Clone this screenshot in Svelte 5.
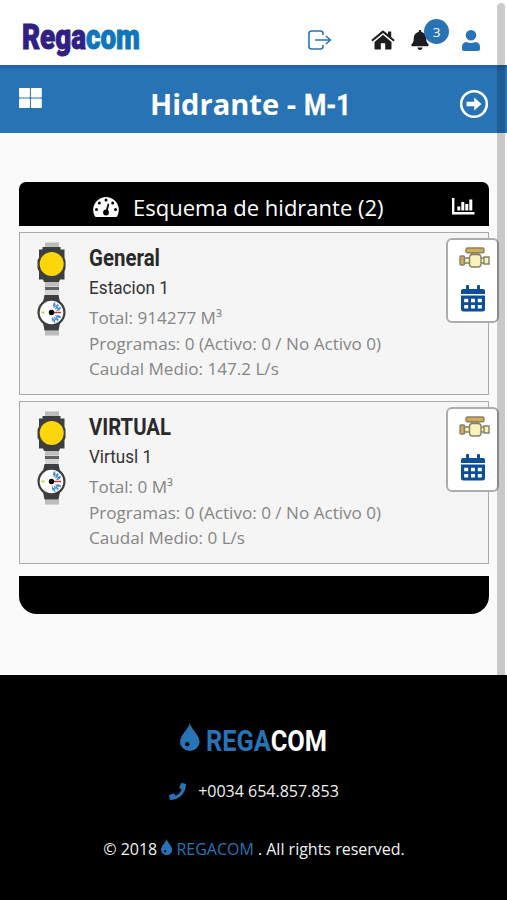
<script>
  const stations = [
    { name: "General", nameWidth: 71, place: "Estacion 1", placeWidth: 80, total: "914277", flow: "147.2" },
    { name: "VIRTUAL", nameWidth: 82, place: "Virtusl 1", placeWidth: 63, total: "0", flow: "0" },
  ];

  const ticks = [-72, -50, -28, 28, 50, 72];
</script>

{#snippet drop(size)}
  <svg class="drop" width={size * 0.7} height={size} viewBox="0 0 19 27">
    <path d="M9.5 0C8.5 5.5 0 12 0 18a9.5 9 0 0 0 19 0C19 12 10.5 5.500 9.500 0z" />
    <circle class="hole" cx="7" cy="20.500" r="2.100" />
  </svg>
{/snippet}

<header>
  <svg class="logo" width="122" height="36" viewBox="0 0 122 36">
    <text x="1" y="27" textLength="118" lengthAdjust="spacingAndGlyphs">Rega<tspan>com</tspan></text>
  </svg>
  <nav>
    <svg class="out" width="24" height="20" viewBox="0 0 24 20">
      <path d="M15 5V3.500Q15 1 12.500 1H3.500Q1 1 1 3.500v13Q1 19 3.500 19h9Q15 19 15 16.500V15M7 10h15M18 6l4.300 4-4.300 4" />
    </svg>
    <svg class="home" width="24" height="20" viewBox="0 0 24 20">
      <path d="M12 4.700 3.500 12v6.500Q3.500 19.500 4.500 19.500h5.300v-6.300h4.400v6.300h5.300q1 0 1-1V12z" />
      <path d="M11 .900q1-.8 2 0l4 3.400V1.500h3.200v5.600l3.500 3-1.200 1.500L12 2.900l-10.500 8.700L.300 10.100z" />
    </svg>
    <div class="bell">
      <svg width="18" height="20" viewBox="0 0 448 512">
        <path d="M224 512c35.320 0 63.970-28.650 63.970-64H160.030c0 35.350 28.650 64 63.970 64zm215.390-149.710c-19.320-20.760-55.470-51.990-55.470-154.290 0-77.700-54.480-139.900-127.940-155.160V32c0-17.670-14.320-32-31.980-32s-31.980 14.330-31.980 32v20.840C118.560 68.100 64.080 130.300 64.080 208c0 102.300-36.150 133.530-55.470 154.290-6 6.450-8.660 14.160-8.610 21.710.11 16.400 12.980 32 32.100 32h383.800c19.120 0 32-15.600 32.100-32 .05-7.550-2.610-15.270-8.610-21.710z" />
      </svg>
      <span class="badge">3</span>
    </div>
    <svg class="user" width="18" height="21" viewBox="0 0 18 21">
      <circle cx="9" cy="5.300" r="5.300" />
      <path d="M4.500 12Q9 14 13.500 12 18 12.500 18 17v2q0 2-2 2H2q-2 0-2-2v-2q0-4.500 4.500-5z" />
    </svg>
  </nav>
</header>

<div class="titlebar">
  <svg class="grid" width="23" height="20" viewBox="0 0 23 20">
    <rect width="10.900" height="9.500" rx="0.800" />
    <rect x="11.900" width="10.900" height="9.500" rx="0.800" />
    <rect y="10.500" width="10.900" height="9.500" rx="0.800" />
    <rect x="11.900" y="10.500" width="10.900" height="9.500" rx="0.800" />
  </svg>
  <svg class="title" width="204" height="40" viewBox="0 0 204 40">
    <text class="word" x="0" y="30" textLength="146" lengthAdjust="spacingAndGlyphs">Hidrante -</text>
    <text class="code" x="154" y="30" textLength="47" lengthAdjust="spacingAndGlyphs">M-1</text>
  </svg>
  <svg class="next" width="30" height="30" viewBox="0 0 30 30">
    <circle cx="15" cy="15" r="12.800" />
    <path d="M7.500 12.800h7.700V8.500l7.300 6.500-7.300 6.500v-4.300H7.500z" />
  </svg>
</div>

<main>
  <div class="head">
    <svg class="gauge" width="26" height="20" viewBox="0 0 26 20">
      <path d="M13 0A13 13 0 0 0 1.800 19.300q.4.700 1.200.7h20q.8 0 1.200-.7A13 13 0 0 0 13 0z" />
      <g class="dots">
        <circle cx="3.500" cy="12.500" r="1.500" />
        <circle cx="6.300" cy="6" r="1.500" />
        <circle cx="13" cy="3.100" r="1.500" />
        <circle cx="19.700" cy="6" r="1.500" />
        <circle cx="22.500" cy="12.500" r="1.500" />
        <circle cx="13" cy="15.500" r="2.900" />
        <path d="M14.800 6.500l1.500.4-2 8h-2z" />
      </g>
    </svg>
    <h2>Esquema de hidrante (2)</h2>
    <svg class="chart" width="23" height="17" viewBox="0 0 23 17">
      <path d="M0 0h2.400v14H22.500v2.600H0zM5.300 8.500h3v4h-3zM9.300 4h3v8.500h-3zM13.300 6h3v6.500h-3zM17.300 1.500h3v11h-3z" />
    </svg>
  </div>

  {#each stations as s}
    <section>
      <svg class="device" width="30" height="94" viewBox="0 0 30 94">
        <path class="strap" d="M8 0h14v94H8z" />
        <path class="shade" d="M8 3h14M8 42h14M8 91h14" />
        <path class="strap-mark" d="M8 46.500h14" />
        <path class="case" d="M5.500 5h18v2.500h4v8l1 3v8l-1 3v8h-4.500l-1 2.500H7l-1-2.500H2v-8l-1.500-3v-8l1.500-3v-8h3.500z" />
        <circle class="yellow" cx="14.700" cy="22" r="12" />
        <path class="case" d="M7.500 53h14l1.500 7v21l-1.500 7.500h-14L6 81V60z" />
        <circle class="case" cx="14.500" cy="70.500" r="14" />
        <circle class="dial" cx="14.500" cy="70.500" r="11.800" />
        {#each ticks as angle}
          <path class="tick" d="M21 70.500h4" transform="rotate({angle} 14.500 70.500)" />
          <path class="tick thin" d="M19.500 70.500h4" transform="rotate({angle + 9} 14.500 70.500)" />
        {/each}
        <path class="green" d="M4.500 70.500h3" />
        <path class="red" d="M15 70.500h9" />
        <circle class="pivot" cx="14.500" cy="70.500" r="2.700" />
      </svg>
      <div class="info">
        <svg class="name" width={s.nameWidth + 2} height="30">
          <text x="0" y="23" textLength={s.nameWidth} lengthAdjust="spacingAndGlyphs">{s.name}</text>
        </svg>
        <svg class="place" width={s.placeWidth + 2} height="30">
          <text x="0" y="21" textLength={s.placeWidth} lengthAdjust="spacingAndGlyphs">{s.place}</text>
        </svg>
        <p>Total: {s.total} M³</p>
        <p>Programas: 0 (Activo: 0 / No Activo 0)</p>
        <p>Caudal Medio: {s.flow} L/s</p>
      </div>
      <div class="actions">
        <svg class="valve" width="31" height="22" viewBox="0 0 31 22">
          <path class="brass" d="M12.500 5h7v3.500h-7z" />
          <rect class="brass" x="7" y="1" width="18" height="4.800" rx="1.500" />
          <rect class="brass" x="1" y="9" width="4.500" height="9" rx="1" />
          <path class="pale" d="M5.500 11h5.500v5H5.500zM21 11h4v5h-4zM25 10h5v7h-5z" />
          <rect class="pale" x="10.500" y="7.500" width="11.500" height="12.500" rx="3" />
        </svg>
        <svg class="calendar" width="24" height="27" viewBox="0 0 24 27">
          <path d="M0 9V6q0-2 2-2h3V1q0-1 1-1h1q1 0 1 1v3h8V1q0-1 1-1h1q1 0 1 1v3h3q2 0 2 2v3zM0 10.500h24V24q0 2.500-2.500 2.500h-19Q0 26.500 0 24z" />
          <path class="cells" d="M3.200 13.700h4v3.600h-4zM10 13.700h4v3.600h-4zM16.800 13.700h4v3.600h-4zM3.200 20h4v3.600h-4zM10 20h4v3.600h-4zM16.800 20h4v3.600h-4z" />
        </svg>
      </div>
    </section>
  {/each}

  <div class="foot"></div>
</main>

<footer>
  <div class="brand">
    {@render drop(28)}
    <svg width="122" height="36" viewBox="0 0 122 36">
      <text x="0" y="28" textLength="121" lengthAdjust="spacingAndGlyphs"><tspan>REGA</tspan>COM</text>
    </svg>
  </div>
  <div class="phone">
    <svg width="17" height="17" viewBox="0 0 512 512">
      <path d="M493.400 24.600l-104-24c-11.300-2.600-22.900 3.300-27.500 13.900l-48 112c-4.200 9.800-1.400 21.300 6.900 28l60.600 49.600c-36 76.700-98.900 140.500-177.200 177.200l-49.600-60.600c-6.800-8.300-18.200-11.100-28-6.900l-112 48C3.900 366.500-2 378.100.6 389.400l24 104C27.100 504.200 36.700 512 48 512c256.100 0 464-207.500 464-464 0-11.200-7.700-20.900-18.600-23.400z" />
    </svg>
    <span>+0034 654.857.853</span>
  </div>
  <div class="copy">
    <span>© 2018</span>
    {@render drop(16)}
    <span class="blue">REGACOM</span>
    <span>. All rights reserved.</span>
  </div>
</footer>

<div class="scrollbar"></div>

<style>
  :global(body) {
    background: #fafafa;
    font-family: "Open Sans", sans-serif;
    overflow: hidden;
  }

  svg {
    display: block;
    flex: none;
    overflow: visible;
  }

  header {
    height: 65px;
    box-sizing: border-box;
    padding: 22px 27px 0 21px;
    display: flex;
    justify-content: space-between;
    background: white;
  }

  .logo text {
    font: 900 35px Roboto, sans-serif;
    fill: #2f2183;
    stroke: #2f2183;
    stroke-width: 1;
  }

  .logo tspan {
    fill: #0f75bd;
    stroke: #0f75bd;
  }

  nav {
    display: flex;
    padding-top: 8px;
  }

  .out {
    margin-right: 39px;
    fill: none;
    stroke: #2b76b9;
    stroke-width: 1.6;
  }

  .home {
    margin-right: 16px;
    fill: #1b1d1e;
  }

  .bell {
    position: relative;
    width: 18px;
    margin-right: 33px;
    fill: #1b1d1e;
  }

  .badge {
    position: absolute;
    left: 13px;
    top: -11px;
    width: 25px;
    height: 25px;
    border-radius: 50%;
    background: #2773b6;
    color: white;
    font-size: 13.500px;
    line-height: 26px;
    text-align: center;
  }

  .user {
    fill: #2773b6;
  }

  .titlebar {
    height: 68px;
    box-sizing: border-box;
    padding: 0 18px 0 19px;
    display: flex;
    justify-content: space-between;
    background: linear-gradient(#20609a, #2773b6 6px);
  }

  .grid {
    margin-top: 23px;
    fill: white;
  }

  .title {
    margin-top: 20px;
    margin-left: 2px;
  }

  .title text {
    fill: white;
    font-weight: 700;
    font-size: 28.500px;
  }

  .title .code {
    font-family: Roboto, sans-serif;
    font-size: 29px;
    stroke: white;
    stroke-width: 0.300;
  }

  .next {
    margin-top: 24px;
    fill: white;
  }

  .next circle {
    fill: none;
    stroke: white;
    stroke-width: 2.600;
  }

  main {
    padding: 49px 18px 0 19px;
    height: 542px;
    box-sizing: border-box;
  }

  .head {
    height: 44px;
    display: flex;
    align-items: center;
    padding: 0 14px 0 74px;
    margin-bottom: 6px;
    border-radius: 7px 7px 0 0;
    background: black;
    fill: white;
    color: white;
  }

  .gauge {
    margin-top: 6px;
  }

  .dots {
    fill: black;
  }

  h2 {
    flex: 1;
    margin: 5px 0 0 14px;
    font-size: 22px;
    font-weight: 400;
    line-height: 30px;
    white-space: nowrap;
  }

  .chart {
    margin-top: 5px;
  }

  section {
    height: 163px;
    box-sizing: border-box;
    margin-bottom: 6px;
    padding: 9px 0 0 17px;
    display: flex;
    position: relative;
    border: 1px solid #aaa;
    background: #f5f5f5;
  }

  .strap {
    fill: #d6d6d6;
  }

  .shade {
    stroke: #bdbdbd;
    stroke-width: 4;
  }

  .strap-mark {
    stroke: #606060;
    stroke-width: 3;
  }

  .case {
    fill: #3d3e40;
  }

  .yellow {
    fill: #fdd50b;
  }

  .dial {
    fill: white;
  }

  .tick {
    stroke: #3d86cf;
    stroke-width: 1.600;
  }

  .thin {
    stroke-width: 1;
  }

  .green {
    stroke: #bdd63a;
    stroke-width: 2;
  }

  .red {
    stroke: #d83030;
    stroke-width: 1.500;
  }

  .info {
    margin-top: 1px;
    margin-left: 22px;
  }

  .name text {
    font: 700 23px Roboto, sans-serif;
    fill: #2a2a2a;
  }

  .place text {
    font: 400 19px Roboto, sans-serif;
    fill: #333;
  }

  p {
    margin: 0;
    color: #858585;
    font-size: 17.100px;
    line-height: 25.600px;
    white-space: nowrap;
  }

  .place {
    margin-bottom: 2px;
  }

  /* hangs over the right edge of the card */
  .actions {
    position: absolute;
    right: -11px;
    top: 5px;
    width: 53px;
    height: 85px;
    box-sizing: border-box;
    display: flex;
    flex-direction: column;
    align-items: center;
    padding-top: 7px;
    gap: 16px;
    border: 2px solid #acacac;
    border-radius: 6px;
    background: white;
  }

  .valve {
    margin-left: 4px;
    stroke: #85806c;
    stroke-width: 1.400;
  }

  .brass {
    fill: #d7ac52;
  }

  .pale {
    fill: #faf3b9;
  }

  .calendar {
    fill: #0d4e98;
  }

  .cells {
    fill: white;
  }

  .foot {
    height: 38px;
    margin-top: 12px;
    border-radius: 0 0 18px 18px;
    background: black;
  }

  footer {
    height: 225px;
    box-sizing: border-box;
    padding: 48px 0 0 1px;
    background: black;
    color: #f2f2f2;
    font-size: 16px;
  }

  .brand {
    display: flex;
    justify-content: center;
    gap: 7px;
    height: 36px;
  }

  .brand text {
    font: 700 30px Roboto, sans-serif;
    fill: white;
  }

  .brand tspan,
  .drop,
  .phone svg {
    fill: #2773b6;
  }

  .drop .hole {
    fill: black;
  }

  .phone {
    display: flex;
    justify-content: center;
    align-items: center;
    gap: 12px;
    height: 24px;
    margin-top: 20px;
  }

  .copy {
    display: flex;
    justify-content: center;
    gap: 4px;
    height: 24px;
    line-height: 24px;
    margin-top: 34px;
  }

  .copy .drop {
    margin-top: 2px;
  }

  .blue {
    color: #2773b6;
  }

  .scrollbar {
    position: fixed;
    right: 2px;
    top: 3px;
    width: 8px;
    height: 890px;
    border-radius: 4px;
    background: rgba(0, 0, 0, 0.2);
  }
</style>
